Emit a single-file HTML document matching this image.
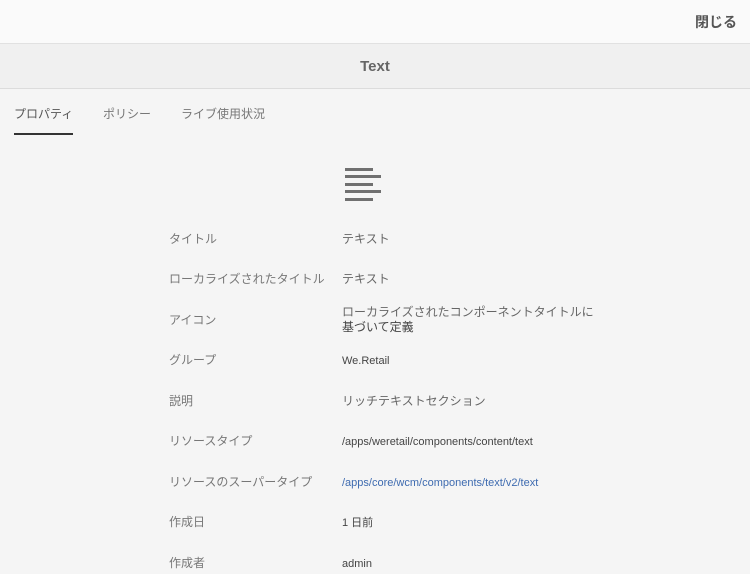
<!DOCTYPE html>
<html><head><meta charset="utf-8"><style>
body{margin:0;width:750px;height:574px;overflow:hidden;background:#f5f5f5;font-family:"Liberation Sans","Noto Sans CJK JP",sans-serif;color:#666}
.top{height:43px;background:#fafafa;border-bottom:1px solid #e1e1e1;position:relative}
.close{position:absolute;right:13px;top:12px;font-size:14px;color:#555;font-weight:bold}
.title{height:44px;background:#f0f0f0;border-bottom:1px solid #dcdcdc;text-align:center;line-height:46px;font-size:15px;font-weight:bold;color:#666}
.tabs{position:relative;height:46px}
.tab{position:absolute;top:16px;font-size:12px;color:#777}
.ul{position:absolute;left:14px;top:44px;width:59px;height:2px;background:#333}
.bar{position:absolute;left:345px;height:3px;background:#707070}
.row{position:absolute;font-size:12px;line-height:15px}
.l{left:169px;color:#777}
.v{left:342px;color:#666}
.d{color:#444}
</style></head><body>
<div class="top"><span class="close">閉じる</span></div>
<div class="title">Text</div>
<div class="tabs">
<span class="tab" style="left:14px;color:#555">プロパティ</span>
<span class="tab" style="left:103px">ポリシー</span>
<span class="tab" style="left:181px">ライブ使用状況</span>
<div class="ul"></div></div>
<div class="bar" style="top:168px;width:28px"></div>
<div class="bar" style="top:175px;width:36px"></div>
<div class="bar" style="top:183px;width:28px"></div>
<div class="bar" style="top:190px;width:36px"></div>
<div class="bar" style="top:198px;width:28px"></div>
<div class="row l" style="top:232px">タイトル</div><div class="row v" style="top:232px">テキスト</div>
<div class="row l" style="top:272px">ローカライズされたタイトル</div><div class="row v" style="top:272px">テキスト</div>
<div class="row l" style="top:313px">アイコン</div><div class="row v" style="top:305px">ローカライズされたコンポーネントタイトルに<br><span class="d">基づいて定義</span></div>
<div class="row l" style="top:353px">グループ</div><div class="row v d" style="top:354px;font-size:11px">We.Retail</div>
<div class="row l" style="top:394px">説明</div><div class="row v" style="top:394px">リッチテキストセクション</div>
<div class="row l" style="top:434px">リソースタイプ</div><div class="row v d" style="top:435px;font-size:11px">/apps/weretail/components/content/text</div>
<div class="row l" style="top:475px">リソースのスーパータイプ</div><div class="row v" style="top:476px;font-size:11px;color:#3e6bb0">/apps/core/wcm/components/text/v2/text</div>
<div class="row l" style="top:515px">作成日</div><div class="row v d" style="top:516px;font-size:11px">1 日前</div>
<div class="row l" style="top:556px">作成者</div><div class="row v d" style="top:557px;font-size:11px">admin</div>
</body></html>
